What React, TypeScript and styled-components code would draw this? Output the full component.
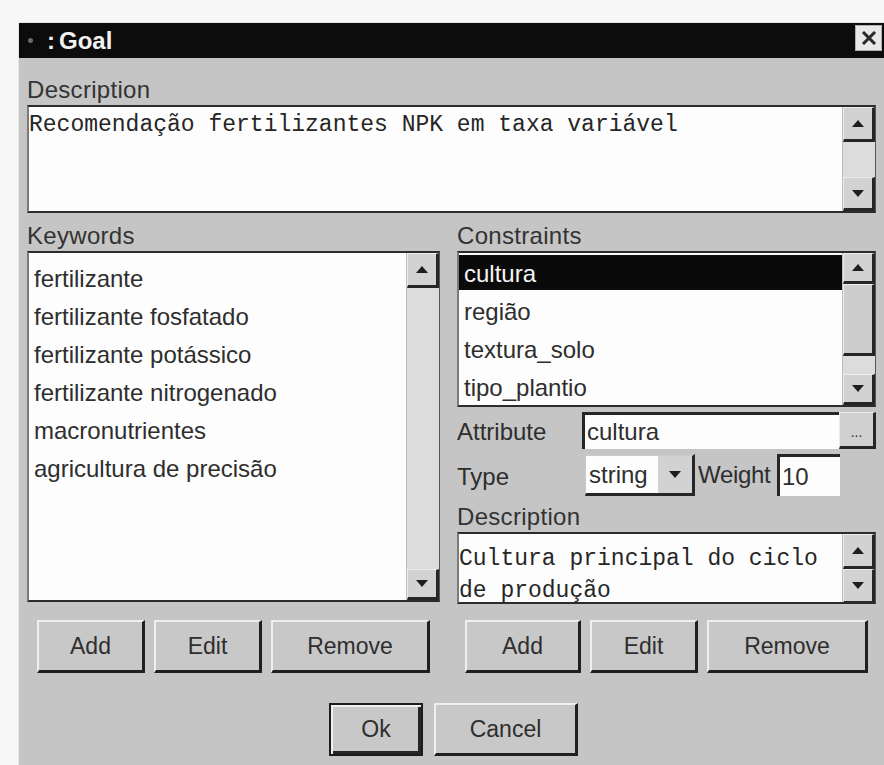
import React from "react";
import styled, { createGlobalStyle } from "styled-components";

const GlobalStyle = createGlobalStyle`
  html, body {
    margin: 0;
    padding: 0;
    background: #f7f7f7;
  }
  body {
    font-family: "Liberation Sans", Arial, sans-serif;
    color: #2b2b2b;
    overflow: hidden;
  }
`;

const keywords = [
  "fertilizante",
  "fertilizante fosfatado",
  "fertilizante potássico",
  "fertilizante nitrogenado",
  "macronutrientes",
  "agricultura de precisão",
];

const constraints = ["cultura", "região", "textura_solo", "tipo_plantio"];

function Arrow({ dir }: { dir: "up" | "down" }) {
  return (
    <svg width="12" height="7" viewBox="0 0 12 7">
      {dir === "up" ? (
        <polygon points="6,0 12,7 0,7" fill="#1e1e1e" />
      ) : (
        <polygon points="0,0 12,0 6,7" fill="#1e1e1e" />
      )}
    </svg>
  );
}

type ScrollProps = {
  up: number;
  down: number;
  thumb?: number;
};

function ScrollBar({ up, down, thumb }: ScrollProps) {
  return (
    <Scroll>
      <ScrollButton $h={up}>
        <Arrow dir="up" />
      </ScrollButton>
      {thumb ? <Thumb $h={thumb} /> : null}
      <Track />
      <ScrollButton $h={down}>
        <Arrow dir="down" />
      </ScrollButton>
    </Scroll>
  );
}

export default function App() {
  return (
    <>
      <GlobalStyle />
      <Window>
        <TitleBar>
          <TitleDot />
          <TitleText>
            <span>:</span>Goal
          </TitleText>
          <CloseBox>
            <svg width="16" height="14" viewBox="0 0 16 14">
              <path d="M2 1 L14 13 M14 1 L2 13" stroke="#2a2a2a" strokeWidth="3" />
            </svg>
          </CloseBox>
        </TitleBar>

        <Body>
          <Label>Description</Label>
          <Field $h={108}>
            <MonoText $lh={36} $pad={0}>
              Recomendação fertilizantes NPK em taxa variável
            </MonoText>
            <ScrollBar up={35} down={34} />
          </Field>

          <Columns>
            <Column>
              <Label $top={11}>Keywords</Label>
              <Field $h={351}>
                <List>
                  {keywords.map((k) => (
                    <Row key={k}>{k}</Row>
                  ))}
                </List>
                <ScrollBar up={35} down={31} />
              </Field>
            </Column>

            <Column>
              <Label $top={11}>Constraints</Label>
              <Field $h={156}>
                <List $tight>
                  {constraints.map((c, i) => (
                    <Row key={c} $selected={i === 0}>
                      {c}
                    </Row>
                  ))}
                </List>
                <ScrollBar up={31} down={31} thumb={72} />
              </Field>

              <FormRow $top={5} $h={37}>
                <FormLabel $w={125}>Attribute</FormLabel>
                <Input $w={257}>cultura</Input>
                <DotsButton>...</DotsButton>
              </FormRow>

              <FormRow $top={5} $h={42}>
                <FormLabel $w={128}>Type</FormLabel>
                <Select>
                  <span>string</span>
                  <SelectArrow>
                    <Arrow dir="down" />
                  </SelectArrow>
                </Select>
                <WeightLabel>Weight</WeightLabel>
                <Input $w={63}>10</Input>
              </FormRow>

              <Label $top={9}>Description</Label>
              <Field $h={72}>
                <MonoText $lh={32} $pad={9}>
                  Cultura principal do ciclo
                  <br />
                  de produção
                </MonoText>
                <ScrollBar up={35} down={35} />
              </Field>
            </Column>
          </Columns>

          <Columns>
            <ButtonGroup $left={10}>
              <Button $w={108}>Add</Button>
              <Button $w={108}>Edit</Button>
              <Button $w={159}>Remove</Button>
            </ButtonGroup>
            <ButtonGroup $left={8}>
              <Button $w={116}>Add</Button>
              <Button $w={108}>Edit</Button>
              <Button $w={161}>Remove</Button>
            </ButtonGroup>
          </Columns>

          <Footer>
            <DefaultButton>Ok</DefaultButton>
            <Button $w={144}>Cancel</Button>
          </Footer>
        </Body>
      </Window>
    </>
  );
}

const Window = styled.div`
  margin: 22px 0 0 18px;
  width: 866px;
  height: 760px;
  background: #c5c5c5;
  border-left: 1px solid #e4e4e4;
  border-top: 1px solid #e4e4e4;
  box-sizing: border-box;
`;

const TitleBar = styled.div`
  height: 35px;
  background: #0c0c0c;
  display: flex;
  align-items: center;
  padding: 0 2px 0 9px;
`;

const TitleDot = styled.span`
  width: 5px;
  height: 5px;
  border-radius: 50%;
  background: #6a6a6a;
  margin-right: 14px;
`;

const TitleText = styled.span`
  flex: 1;
  color: #f2f2f2;
  font-weight: bold;
  font-size: 24px;

  span {
    margin-right: 4px;
  }
`;

const CloseBox = styled.div`
  width: 27px;
  height: 26px;
  margin-top: -6px;
  background: #e8e8e8;
  display: flex;
  align-items: center;
  justify-content: center;
  box-sizing: border-box;
  border: 1px solid #b0b0b0;
`;

const Body = styled.div`
  padding: 20px 8px 0 8px;
`;

const Label = styled.div<{ $top?: number }>`
  font-size: 24px;
  line-height: 24px;
  height: 24px;
  margin: ${(p) => p.$top ?? 0}px 0 3px 0;
  color: #333;
  letter-spacing: 0.3px;
`;

const Field = styled.div<{ $h: number }>`
  height: ${(p) => p.$h}px;
  display: flex;
  background: #fdfdfd;
  border-style: solid;
  border-width: 2px 1px 2px 2px;
  border-color: #2c2c2c #555 #2c2c2c #7a7a7a;
  box-sizing: border-box;
  overflow: hidden;
`;

const MonoText = styled.div<{ $lh: number; $pad: number }>`
  flex: 1;
  font-family: "Liberation Mono", "Courier New", monospace;
  font-size: 23px;
  line-height: ${(p) => p.$lh}px;
  padding-top: ${(p) => p.$pad}px;
  color: #262626;
  white-space: nowrap;
`;

const Scroll = styled.div`
  width: 32px;
  display: flex;
  flex-direction: column;
  background: #d6d6d6;
  border-left: 1px solid #bdbdbd;
`;

const ScrollButton = styled.div<{ $h: number }>`
  height: ${(p) => p.$h}px;
  flex: none;
  display: flex;
  align-items: center;
  justify-content: center;
  background: #d2d2d2;
  box-sizing: border-box;
  border-style: solid;
  border-width: 1px 3px 3px 1px;
  border-color: #ececec #262626 #262626 #ececec;
`;

const Thumb = styled.div<{ $h: number }>`
  height: ${(p) => p.$h}px;
  flex: none;
  background: #cdcdcd;
  box-sizing: border-box;
  border-style: solid;
  border-width: 1px 3px 3px 1px;
  border-color: #ececec #262626 #262626 #ececec;
`;

const Track = styled.div`
  flex: 1;
  background: #dcdcdc;
`;

const Columns = styled.div`
  display: grid;
  grid-template-columns: 413px 419px;
  column-gap: 17px;
`;

const Column = styled.div`
  display: flex;
  flex-direction: column;
`;

const List = styled.div<{ $tight?: boolean }>`
  flex: 1;
  padding-top: ${(p) => (p.$tight ? 2 : 7)}px;
`;

const Row = styled.div<{ $selected?: boolean }>`
  height: 38px;
  line-height: 38px;
  padding-left: 5px;
  font-size: 24px;
  color: ${(p) => (p.$selected ? "#f5f5f5" : "#2e2e2e")};
  background: ${(p) => (p.$selected ? "#0a0a0a" : "transparent")};
  white-space: nowrap;
  ${(p) => (p.$selected ? "height: 35px; line-height: 37px; margin-bottom: 3px;" : "")}
`;

const FormRow = styled.div<{ $top: number; $h: number }>`
  margin-top: ${(p) => p.$top}px;
  height: ${(p) => p.$h}px;
  display: flex;
  align-items: stretch;
`;

const FormLabel = styled.div<{ $w: number }>`
  width: ${(p) => p.$w}px;
  font-size: 24px;
  display: flex;
  align-items: center;
  padding-top: 3px;
  color: #2e2e2e;
`;

const Input = styled.div<{ $w: number }>`
  width: ${(p) => p.$w}px;
  background: #fdfdfd;
  font-size: 24px;
  display: flex;
  align-items: center;
  padding-left: 2px;
  box-sizing: border-box;
  border-style: solid;
  border-width: 3px 0 0 3px;
  border-color: #262626;
  color: #2e2e2e;
`;

const DotsButton = styled.div`
  width: 37px;
  background: #d0d0d0;
  font-size: 14px;
  display: flex;
  align-items: flex-end;
  justify-content: center;
  padding-bottom: 6px;
  box-sizing: border-box;
  border-style: solid;
  border-width: 1px 3px 3px 1px;
  border-color: #ececec #262626 #262626 #ececec;
`;

const Select = styled.div`
  width: 110px;
  display: flex;
  align-items: center;
  background: #fdfdfd;
  font-size: 24px;
  padding-left: 3px;
  box-sizing: border-box;
  border-style: solid;
  border-width: 2px 3px 3px 1px;
  border-color: #c8c8c8 #262626 #262626 #c8c8c8;
  color: #2e2e2e;

  span {
    flex: 1;
  }
`;

const SelectArrow = styled.div`
  width: 34px;
  align-self: stretch;
  display: flex;
  align-items: center;
  justify-content: center;
  background: #d2d2d2;
`;

const WeightLabel = styled.div`
  width: 82px;
  font-size: 24px;
  display: flex;
  align-items: center;
  padding-left: 3px;
  box-sizing: border-box;
  letter-spacing: -0.3px;
  color: #2e2e2e;
`;

const ButtonGroup = styled.div<{ $left: number }>`
  display: flex;
  gap: 9px;
  margin: 16px 0 0 ${(p) => p.$left}px;
`;

const Button = styled.div<{ $w: number }>`
  width: ${(p) => p.$w}px;
  height: 53px;
  display: flex;
  align-items: center;
  justify-content: center;
  font-size: 23px;
  color: #2e2e2e;
  background: #c8c8c8;
  box-sizing: border-box;
  border-style: solid;
  border-width: 2px 3px 3px 2px;
  border-color: #efefef #202020 #202020 #efefef;
`;

const DefaultButton = styled.div`
  width: 94px;
  height: 53px;
  display: flex;
  align-items: center;
  justify-content: center;
  font-size: 23px;
  color: #2e2e2e;
  background: #c8c8c8;
  box-sizing: border-box;
  border: 2px solid #1c1c1c;
  box-shadow: inset 2px 2px 0 #efefef, inset -3px -3px 0 #262626;
`;

const Footer = styled.div`
  display: flex;
  justify-content: center;
  gap: 11px;
  margin-top: 30px;
  padding-left: 4px;
`;
